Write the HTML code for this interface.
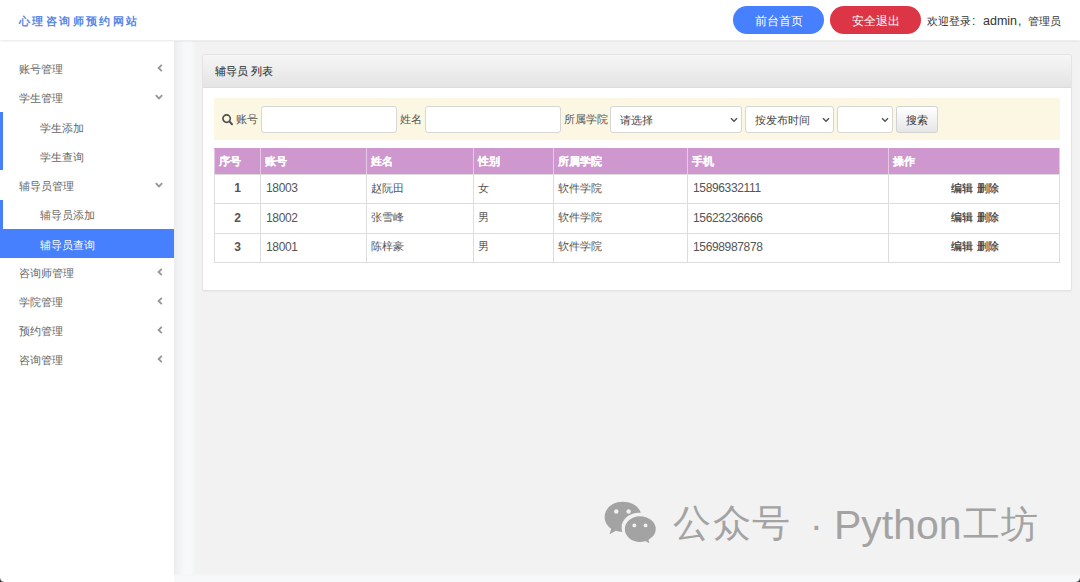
<!DOCTYPE html>
<html><head><meta charset="utf-8">
<style>
*{margin:0;padding:0;box-sizing:border-box;}
html,body{width:1080px;height:582px;overflow:hidden;background:#fff;font-family:"Liberation Sans",sans-serif;color:#333;}
.hdr{position:absolute;left:0;top:0;width:1080px;height:40px;background:#fff;box-shadow:0 1px 2px rgba(0,0,0,0.1);z-index:2;}
.logo{position:absolute;left:19px;top:14.5px;font-size:10.5px;font-weight:bold;color:#5686e8;letter-spacing:2.4px;white-space:nowrap;}
.btn{position:absolute;top:6px;height:28px;width:91px;border-radius:14px;color:#fff;font-size:11.5px;text-align:center;line-height:31px;}
.b1{left:733px;background:#4780fe;}
.b2{left:830px;background:#dc3545;}
.welcome{position:absolute;left:927px;top:14px;font-size:11px;color:#333;white-space:nowrap;}
.welcome span{position:absolute;top:0;line-height:14px;}
.side{position:absolute;left:0;top:41px;width:174px;height:541px;background:#fff;}
.mi{position:absolute;left:0;width:174px;height:29px;font-size:11px;color:#666;line-height:29px;}
.mi .t{position:absolute;left:19px;top:1.5px;}
.mi.sub .t{left:40px;}
.mi svg.ar{position:absolute;left:156.5px;top:11px;}
.mi svg.ard{position:absolute;left:155px;top:12px;}
.mi.act{background:#4780fe;color:#fff;}
.bar{position:absolute;left:0;width:3px;background:#4780fe;}
.main{position:absolute;left:175px;top:41px;width:905px;height:541px;background:#f2f2f2;}
.strip{position:absolute;left:174px;top:41px;width:22px;height:541px;background:linear-gradient(90deg,#eaeaea,#eeeff1 8%,#f2f3f5 25%,#f7f8fa 45%,#f8f9fa 75%,#f2f2f2);}
.strip2{position:absolute;left:174px;top:574px;width:906px;height:8px;background:linear-gradient(#f4f5f6,#f7f8fa 40%);}
.panel{position:absolute;left:202px;top:54px;width:870px;height:237px;background:#fff;border:1px solid #e4e4e4;border-radius:2px;box-shadow:0 1px 1px rgba(0,0,0,0.04);}
.ph{position:absolute;left:0;top:0;width:868px;height:33px;background:linear-gradient(#f6f6f6,#e4e4e4);border-bottom:1px solid #dcdcdc;font-size:11px;color:#333;line-height:33px;padding-left:12px;font-weight:500;-webkit-text-stroke:0.1px #333;}
.search{position:absolute;left:11px;top:43px;width:846px;height:42px;background:#fbf7e3;}
table{position:absolute;left:11px;top:93px;width:846px;border-collapse:collapse;font-size:12px;}
th{background:#ce97cd;color:#fff;font-size:11px;text-align:left;height:26px;padding-left:4px;border:1px solid #e4c8e4;border-top-color:#ce97cd;border-bottom-color:#ddd;font-weight:bold;-webkit-text-stroke:0.1px #fff;}
td{height:29.4px;border:1px solid #ddd;padding-left:5px;color:#555;padding-bottom:2px;font-size:12px;letter-spacing:-0.35px;}
td.z{font-size:11px;padding-left:4px;color:#555;letter-spacing:0;}
.lbl{position:absolute;top:14px;font-size:11px;color:#555;white-space:nowrap;}
.inp{position:absolute;top:8px;height:27px;background:#fff;border:1px solid #d6d6d6;border-radius:3px;}
.sel{position:absolute;top:8px;height:27px;background:#fff;border:1px solid #d6d6d6;border-radius:3px;font-size:11px;color:#444;line-height:26px;padding-left:9px;}
.sbtn{position:absolute;top:8px;width:42px;height:27px;background:linear-gradient(#fff,#e6e6e6);border:1px solid #d2d2d2;border-radius:3px;font-size:11px;text-align:center;line-height:27px;color:#333;}
td.c{text-align:center;font-weight:bold;padding-left:0;}
td.op{text-align:center;font-weight:500;font-size:11px;color:#333;letter-spacing:0;padding-left:2px;padding-right:0;-webkit-text-stroke:0.2px #333;}
.sic{position:absolute;left:8px;top:16px;}
.sel .sa{position:absolute;right:3px;top:9.5px;}
.wm{position:absolute;left:603px;top:500px;width:440px;height:50px;}
.wmt{position:absolute;left:70px;top:-2px;font-size:38px;letter-spacing:1.6px;color:#a3a3a3;white-space:nowrap;line-height:50px;}
.wmd{position:absolute;left:207px;top:1px;font-size:38px;color:#a3a3a3;line-height:50px;}
.wmp{position:absolute;left:231px;top:0px;font-size:41px;letter-spacing:0px;color:#a3a3a3;white-space:nowrap;line-height:50px;}
.wmk{position:absolute;left:360px;top:0px;font-size:37px;letter-spacing:1px;color:#a3a3a3;white-space:nowrap;line-height:50px;}

</style></head><body>
<div class="hdr">
  <div class="logo">心理咨询师预约网站</div>
  <div class="btn b1">前台首页</div>
  <div class="btn b2">安全退出</div>
  <div class="welcome"><span style="left:0">欢迎登录</span><span style="left:45px;font-size:12px;top:0px">:</span><span style="left:56px;font-size:12.5px;top:0px">admin</span><span style="left:91px;font-size:12px;top:0">,</span><span style="left:101px">管理员</span></div>
</div>
<div class="side">
  <div class="mi" style="top:12px"><span class="t">账号管理</span><svg class="ar" width="6" height="8" viewBox="0 0 6 8"><path d="M4.8 0.8 L1.6 4 L4.8 7.2" fill="none" stroke="#969696" stroke-width="1.8"/></svg></div>
  <div class="mi" style="top:41px"><span class="t">学生管理</span><svg class="ard" width="8" height="6" viewBox="0 0 8 6"><path d="M0.8 1.2 L4 4.4 L7.2 1.2" fill="none" stroke="#969696" stroke-width="1.8"/></svg></div>
  <div class="bar" style="top:71px;height:58px"></div>
  <div class="mi sub" style="top:71px"><span class="t">学生添加</span></div>
  <div class="mi sub" style="top:100px"><span class="t">学生查询</span></div>
  <div class="mi" style="top:129px"><span class="t">辅导员管理</span><svg class="ard" width="8" height="6" viewBox="0 0 8 6"><path d="M0.8 1.2 L4 4.4 L7.2 1.2" fill="none" stroke="#969696" stroke-width="1.8"/></svg></div>
  <div class="bar" style="top:159px;height:29px"></div>
  <div class="mi sub" style="top:158px"><span class="t">辅导员添加</span></div>
  <div class="mi sub act" style="top:188px"><span class="t">辅导员查询</span></div>
  <div class="mi" style="top:216px"><span class="t">咨询师管理</span><svg class="ar" width="6" height="8" viewBox="0 0 6 8"><path d="M4.8 0.8 L1.6 4 L4.8 7.2" fill="none" stroke="#969696" stroke-width="1.8"/></svg></div>
  <div class="mi" style="top:245px"><span class="t">学院管理</span><svg class="ar" width="6" height="8" viewBox="0 0 6 8"><path d="M4.8 0.8 L1.6 4 L4.8 7.2" fill="none" stroke="#969696" stroke-width="1.8"/></svg></div>
  <div class="mi" style="top:274px"><span class="t">预约管理</span><svg class="ar" width="6" height="8" viewBox="0 0 6 8"><path d="M4.8 0.8 L1.6 4 L4.8 7.2" fill="none" stroke="#969696" stroke-width="1.8"/></svg></div>
  <div class="mi" style="top:303px"><span class="t">咨询管理</span><svg class="ar" width="6" height="8" viewBox="0 0 6 8"><path d="M4.8 0.8 L1.6 4 L4.8 7.2" fill="none" stroke="#969696" stroke-width="1.8"/></svg></div>
</div>
<div class="main"></div>
<div class="strip"></div>
<div class="strip2"></div>
<div class="panel">
  <div class="ph">辅导员 列表</div>
  <div class="search">
    <svg class="sic" width="12" height="12" viewBox="0 0 12 12"><circle cx="4.6" cy="4.6" r="3.7" fill="none" stroke="#505050" stroke-width="1.7"/><path d="M7.4 7.4 L10 10.2" stroke="#505050" stroke-width="2" stroke-linecap="round"/></svg><span class="lbl" style="left:22px">账号</span>
    <div class="inp" style="left:47px;width:136px"></div>
    <span class="lbl" style="left:186px">姓名</span>
    <div class="inp" style="left:211px;width:136px"></div>
    <span class="lbl" style="left:350px">所属学院</span>
    <div class="sel" style="left:396px;width:132px"><span>请选择</span><svg class="sa" width="8" height="6" viewBox="0 0 8 6"><path d="M1 1.3 L4 4.3 L7 1.3" fill="none" stroke="#555" stroke-width="1.5"/></svg></div>
    <div class="sel" style="left:531px;width:89px"><span>按发布时间</span><svg class="sa" width="8" height="6" viewBox="0 0 8 6"><path d="M1 1.3 L4 4.3 L7 1.3" fill="none" stroke="#555" stroke-width="1.5"/></svg></div>
    <div class="sel" style="left:623px;width:56px"><span></span><svg class="sa" width="8" height="6" viewBox="0 0 8 6"><path d="M1 1.3 L4 4.3 L7 1.3" fill="none" stroke="#555" stroke-width="1.5"/></svg></div>
    <div class="sbtn" style="left:682px">搜索</div>
  </div>
  <table>
    <tr><th style="width:46px">序号</th><th style="width:106px">账号</th><th style="width:107px">姓名</th><th style="width:80px">性别</th><th style="width:134px">所属学院</th><th style="width:201px">手机</th><th>操作</th></tr>
    <tr><td class="c">1</td><td>18003</td><td class="z">赵阮田</td><td class="z">女</td><td class="z">软件学院</td><td>15896332111</td><td class="op">编辑 删除</td></tr>
    <tr><td class="c">2</td><td>18002</td><td class="z">张雪峰</td><td class="z">男</td><td class="z">软件学院</td><td>15623236666</td><td class="op">编辑 删除</td></tr>
    <tr><td class="c">3</td><td>18001</td><td class="z">陈梓豪</td><td class="z">男</td><td class="z">软件学院</td><td>15698987878</td><td class="op">编辑 删除</td></tr>
  </table>
</div>
<div class="wm">
<svg width="54" height="46" viewBox="0 0 54 46" style="position:absolute;left:0.5px;top:0">
<path d="M18.5 1.8 C8.5 1.8 0.6 8.6 0.6 17 C0.6 21.8 3.2 26 7.2 28.8 L5.6 34.2 L11.8 30.8 C13.8 31.5 16 31.9 18.3 32 C17.8 30.6 17.6 29.1 17.6 27.6 C17.6 19.4 25.3 12.8 34.8 12.8 C35.5 12.8 36.1 12.8 36.7 12.9 C35.2 6.5 27.6 1.8 18.5 1.8 Z" fill="#a3a3a3"/>
<circle cx="12.3" cy="11.5" r="2.2" fill="#f2f2f2"/><circle cx="24.6" cy="11.5" r="2.2" fill="#f2f2f2"/>
<path d="M36 15.6 C27.2 15.6 20.2 21.6 20.2 29.1 C20.2 36.6 27.2 42.6 36 42.6 C37.8 42.6 39.6 42.3 41.2 41.8 L46.4 44.6 L45.2 40 C49.6 37.6 52.4 33.6 52.4 29.1 C52.4 21.6 45 15.6 36 15.6 Z" fill="#a3a3a3" stroke="#f2f2f2" stroke-width="1.3"/>
<circle cx="30.3" cy="25.4" r="1.9" fill="#f2f2f2"/><circle cx="41.6" cy="25.4" r="1.9" fill="#f2f2f2"/>
</svg>
<div class="wmt">公众号</div>
<div class="wmd">·</div>
<div class="wmp">Python</div><div class="wmk">工坊</div>
</div>
<div style="position:absolute;right:0;bottom:0;width:4px;height:4px;background:radial-gradient(circle at 0 0,rgba(0,0,0,0) 3.2px,#2a2a2a 4.6px);"></div>
<div style="position:absolute;left:0;bottom:0;width:4px;height:4px;background:radial-gradient(circle at 100% 0,rgba(0,0,0,0) 3.2px,#2a2a2a 4.6px);"></div>
</body></html>
